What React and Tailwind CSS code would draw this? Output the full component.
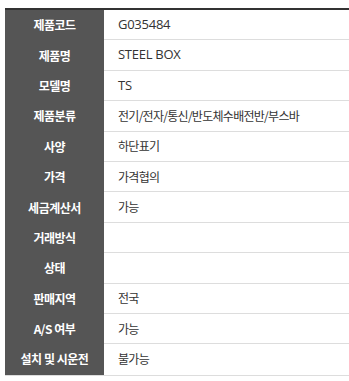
import React from "react";

const rows = [
  ["제품코드", "G035484", true],
  ["제품명", "STEEL BOX", true],
  ["모델명", "TS", true],
  ["제품분류", "전기/전자/통신/반도체수배전반/부스바", false],
  ["사양", "하단표기", false],
  ["가격", "가격협의", false],
  ["세금계산서", "가능", false],
  ["거래방식", "", false],
  ["상태", "", false],
  ["판매지역", "전국", false],
  ["A/S 여부", "가능", false],
  ["설치 및 시운전", "불가능", false],
];

export default function App() {
  return (
    <div
      className="w-[349px] h-[381px] bg-white pt-2 pl-[5px] overflow-hidden"
      style={{ fontFamily: '"Malgun Gothic", "Noto Sans CJK KR", "Noto Sans", sans-serif' }}
    >
      <div className="w-[344px] border-t-2 border-[#333333] border-b border-b-[#dddddd]">
        {rows.map(([k, v, latin], i) => (
          <div key={k} className="flex h-[30.4px]">
            <div className="w-[99px] shrink-0 bg-[#555555] flex items-center justify-center text-white text-[12px] font-semibold tracking-[-0.04em]">
              {k}
            </div>
            <div
              className={
                (i === rows.length - 1 ? "" : "border-b border-[#dddddd] ") +
                "flex-1 flex items-center pl-[14px] text-[#333333]"
              }
            >
              {latin ? (
                <span className="text-[13px] tracking-[-0.02em]" style={{ fontFamily: '"Open Sans", "Noto Sans", sans-serif' }}>{v}</span>
              ) : (
                <span className="text-[12px] tracking-[-0.06em]">{v}</span>
              )}
            </div>
          </div>
        ))}
      </div>
    </div>
  );
}
